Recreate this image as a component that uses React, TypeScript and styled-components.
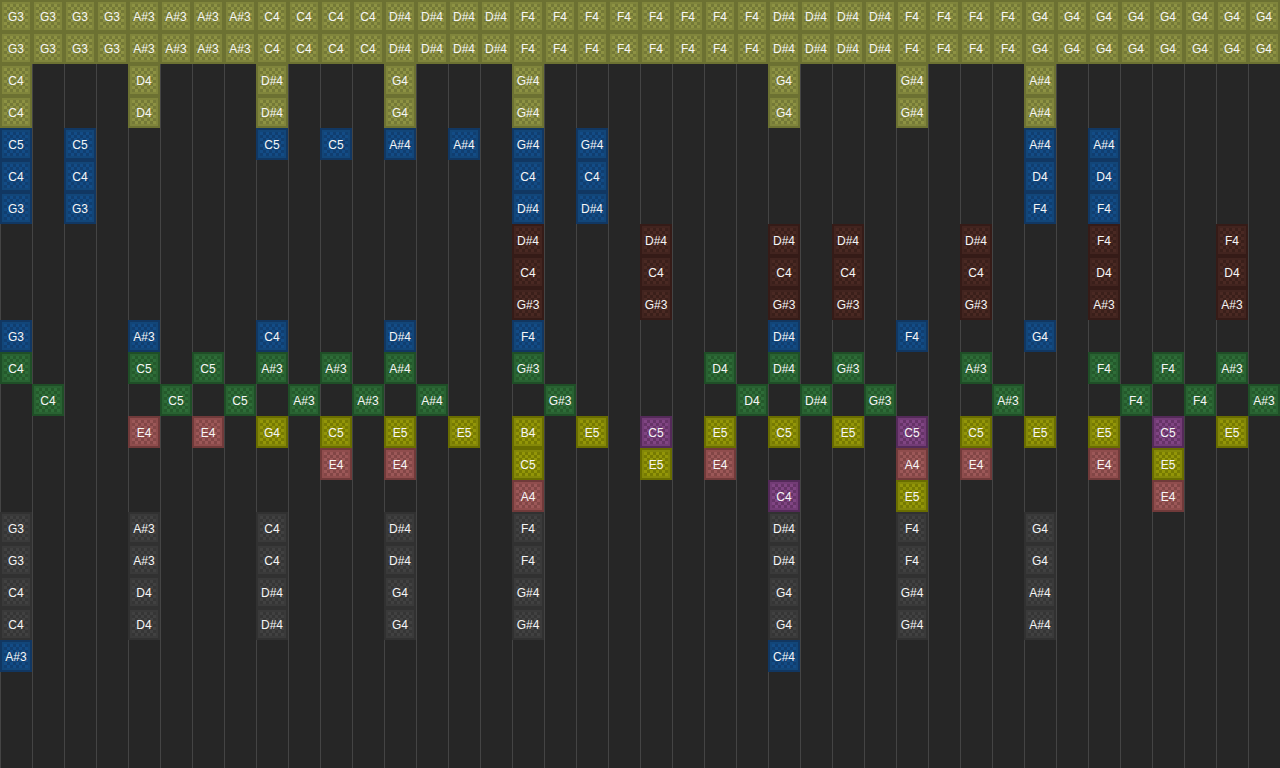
import React from "react";
import styled, { createGlobalStyle } from "styled-components";

const GlobalStyle = createGlobalStyle`
  html, body { margin: 0; padding: 0; background: #262626; overflow: hidden; }
`;

type Tone = "olive" | "blue" | "maroon" | "green" | "red" | "yellow" | "purple" | "gray";

const tones: Record<Tone, { edge: string; band: string; light: string; dark: string }> = {
  olive: { edge: "#6c7132", band: "#80853c", light: "#8d9243", dark: "#747937" },
  blue: { edge: "#113762", band: "#124679", light: "#134c86", dark: "#103e70" },
  maroon: { edge: "#351b17", band: "#42241f", light: "#4a2923", dark: "#3a1f1a" },
  green: { edge: "#1f4e27", band: "#296232", light: "#2e6d38", dark: "#24592b" },
  red: { edge: "#703a3a", band: "#8f4d4d", light: "#9c5858", dark: "#824646" },
  yellow: { edge: "#696d00", band: "#848808", light: "#939608", dark: "#767a02" },
  purple: { edge: "#542a59", band: "#733c76", light: "#804583", dark: "#653367" },
  gray: { edge: "#313131", band: "#3a3a3a", light: "#414141", dark: "#353535" },
};

const Board = styled.main`
  display: grid;
  grid-template-columns: repeat(40, 32px);
  grid-auto-rows: 32px;
  width: 1280px;
  height: 768px;
  overflow: hidden;
  background-color: #262626;
  background-image: linear-gradient(to right, #444444 1px, transparent 1px);
  background-size: 32px 100%;
  font-family: "Liberation Sans", Arial, sans-serif;
`;

const Note = styled.div<{ $tone: Tone; $col: number; $row: number }>`
  grid-column: ${(p) => p.$col + 1};
  grid-row: ${(p) => p.$row + 1};
  box-sizing: border-box;
  width: 32px;
  height: 32px;
  padding: 2px;
  display: flex;
  align-items: center;
  justify-content: center;
  border: 2px solid ${(p) => tones[p.$tone].edge};
  background:
    conic-gradient(
      ${(p) => tones[p.$tone].dark} 25%,
      ${(p) => tones[p.$tone].light} 0 50%,
      ${(p) => tones[p.$tone].dark} 0 75%,
      ${(p) => tones[p.$tone].light} 0
    ) 0 0 / 6px 6px content-box,
    ${(p) => tones[p.$tone].band} padding-box;
`;

const Label = styled.span`
  box-sizing: border-box;
  padding-top: 2px;
  color: #f6f6f6;
  font-size: 12px;
  line-height: 14px;
  white-space: nowrap;
`;

type Entry = [Tone, number, number, string];

const row = (tone: Tone, r: number, items: Array<[number, string]>): Entry[] =>
  items.map(([c, t]) => [tone, r, c, t]);

const header = [
  ...Array(4).fill("G3"), ...Array(4).fill("A#3"), ...Array(4).fill("C4"), ...Array(4).fill("D#4"),
  ...Array(8).fill("F4"), ...Array(4).fill("D#4"), ...Array(4).fill("F4"), ...Array(8).fill("G4"),
] as string[];
const headerItems = header.map((t, i) => [i, t] as [number, string]);

const bass: Array<[number, string]> = [[0, "G3"], [4, "A#3"], [8, "C4"], [12, "D#4"], [16, "F4"], [24, "D#4"], [28, "F4"], [32, "G4"]];
const upper: Array<[number, string]> = [[0, "C4"], [4, "D4"], [8, "D#4"], [12, "G4"], [16, "G#4"], [24, "G4"], [28, "G#4"], [32, "A#4"]];

const notes: Entry[] = [
  ...row("olive", 0, headerItems),
  ...row("olive", 1, headerItems),
  ...row("olive", 2, upper),
  ...row("olive", 3, upper),
  ...row("blue", 4, [[0, "C5"], [2, "C5"], [8, "C5"], [10, "C5"], [12, "A#4"], [14, "A#4"], [16, "G#4"], [18, "G#4"], [32, "A#4"], [34, "A#4"]]),
  ...row("blue", 5, [[0, "C4"], [2, "C4"], [16, "C4"], [18, "C4"], [32, "D4"], [34, "D4"]]),
  ...row("blue", 6, [[0, "G3"], [2, "G3"], [16, "D#4"], [18, "D#4"], [32, "F4"], [34, "F4"]]),
  ...row("maroon", 7, [[16, "D#4"], [20, "D#4"], [24, "D#4"], [26, "D#4"], [30, "D#4"], [34, "F4"], [38, "F4"]]),
  ...row("maroon", 8, [[16, "C4"], [20, "C4"], [24, "C4"], [26, "C4"], [30, "C4"], [34, "D4"], [38, "D4"]]),
  ...row("maroon", 9, [[16, "G#3"], [20, "G#3"], [24, "G#3"], [26, "G#3"], [30, "G#3"], [34, "A#3"], [38, "A#3"]]),
  ...row("blue", 10, bass),
  ...row("green", 11, [[0, "C4"], [4, "C5"], [6, "C5"], [8, "A#3"], [10, "A#3"], [12, "A#4"], [16, "G#3"], [22, "D4"], [24, "D#4"], [26, "G#3"], [30, "A#3"], [34, "F4"], [36, "F4"], [38, "A#3"]]),
  ...row("green", 12, [[1, "C4"], [5, "C5"], [7, "C5"], [9, "A#3"], [11, "A#3"], [13, "A#4"], [17, "G#3"], [23, "D4"], [25, "D#4"], [27, "G#3"], [31, "A#3"], [35, "F4"], [37, "F4"], [39, "A#3"]]),
  ...row("red", 13, [[4, "E4"], [6, "E4"]]),
  ...row("yellow", 13, [[8, "G4"], [10, "C5"], [12, "E5"], [14, "E5"], [16, "B4"], [18, "E5"], [22, "E5"], [24, "C5"], [26, "E5"], [30, "C5"], [32, "E5"], [34, "E5"], [38, "E5"]]),
  ...row("purple", 13, [[20, "C5"], [28, "C5"], [36, "C5"]]),
  ...row("red", 14, [[10, "E4"], [12, "E4"], [22, "E4"], [28, "A4"], [30, "E4"], [34, "E4"]]),
  ...row("yellow", 14, [[16, "C5"], [20, "E5"], [36, "E5"]]),
  ...row("red", 15, [[16, "A4"], [36, "E4"]]),
  ...row("purple", 15, [[24, "C4"]]),
  ...row("yellow", 15, [[28, "E5"]]),
  ...row("gray", 16, bass),
  ...row("gray", 17, bass),
  ...row("gray", 18, upper),
  ...row("gray", 19, upper),
  ...row("blue", 20, [[0, "A#3"], [24, "C#4"]]),
];

export default function App() {
  return (
    <>
      <GlobalStyle />
      <Board>
        {notes.map(([tone, r, c, t]) => (
          <Note key={`${r}-${c}`} $tone={tone} $row={r} $col={c}>
            <Label>{t}</Label>
          </Note>
        ))}
      </Board>
    </>
  );
}
